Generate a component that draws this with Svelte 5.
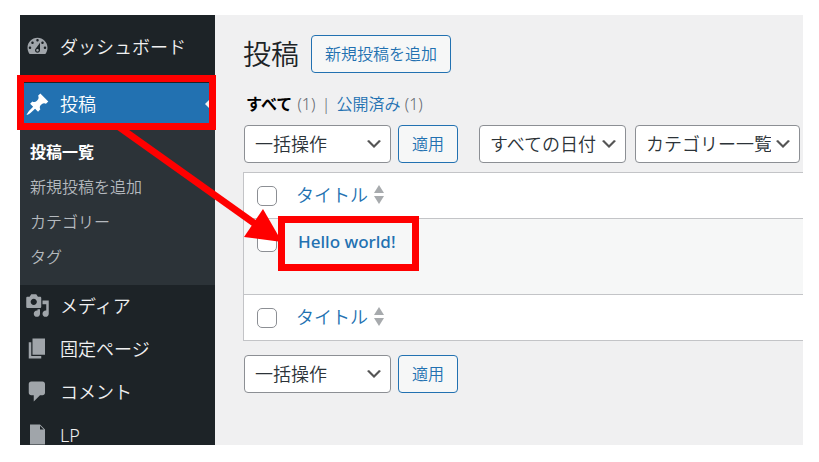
<script lang="ts">
  type MenuItem = { label: string; icon: string; current?: boolean };

  let topMenu: MenuItem[] = [
    {
      label: "ダッシュボード",
      icon: "M3.76 16h12.48c1.1-1.37 1.76-3.11 1.76-5 0-4.42-3.58-8-8-8s-8 3.58-8 8c0 1.89.66 3.63 1.76 5zM10 4c.55 0 1 .45 1 1s-.45 1-1 1-1-.45-1-1 .45-1 1-1zM6 6c.55 0 1 .45 1 1s-.45 1-1 1-1-.45-1-1 .45-1 1-1zm8 0c.55 0 1 .45 1 1s-.45 1-1 1-1-.45-1-1 .45-1 1-1zm-5.37 5.55L12 7v6c0 1.1-.9 2-2 2s-2-.9-2-2c0-.57.24-1.08.63-1.45zM4 10c.55 0 1 .45 1 1s-.45 1-1 1-1-.45-1-1 .45-1 1-1zm12 0c.55 0 1 .45 1 1s-.45 1-1 1-1-.45-1-1 .45-1 1-1zm-5 3c0-.55-.45-1-1-1s-1 .45-1 1 .45 1 1 1 1-.45 1-1z"
    },
    {
      label: "投稿",
      current: true,
      icon: "M10.44 3.02l1.82-1.82 6.36 6.35-1.83 1.82c-1.05-.68-2.48-.57-3.41.36l-.75.75c-.92.93-1.04 2.35-.35 3.41l-1.83 1.82-2.41-2.41-2.8 2.79c-.42.42-3.38 2.71-3.8 2.29s1.86-3.39 2.28-3.81l2.79-2.79L4.1 9.36l1.83-1.82c1.05.69 2.48.57 3.4-.36l.75-.75c.93-.92 1.05-2.35.36-3.41z"
    }
  ];
  let subMenu = ["投稿一覧", "新規投稿を追加", "カテゴリー", "タグ"];
  let bottomMenu: MenuItem[] = [
    {
      label: "メディア",
      icon: "M13 11V4c0-.55-.45-1-1-1h-1.67L9 1H5L3.67 3H2c-.55 0-1 .45-1 1v7c0 .55.45 1 1 1h10c.55 0 1-.45 1-1zM7 4.5c1.38 0 2.5 1.12 2.5 2.5S8.38 9.5 7 9.5 4.5 8.38 4.5 7 5.62 4.5 7 4.5zM14 6h5v10.5c0 1.38-1.12 2.5-2.5 2.5S14 17.88 14 16.5s1.12-2.5 2.5-2.5c.17 0 .34.02.5.05V9h-3V6zm-4 8.05V13h2v3.5c0 1.38-1.12 2.5-2.5 2.5S7 17.88 7 16.5 8.12 14 9.5 14c.17 0 .34.02.5.05z"
    },
    { label: "固定ページ", icon: "M6 15V2h10v13H6zm-1 1h8v2H3V5h2v11z" },
    { label: "コメント", icon: "M5 2h9c1.1 0 2 .9 2 2v7c0 1.1-.9 2-2 2h-2l-5 5v-5H5c-1.1 0-2-.9-2-2V4c0-1.1.9-2 2-2z" },
    { label: "LP", icon: "M12 2l4 4v12H4V2h8zm0 4h3l-3-3v3z" }
  ];

  let posts = [{ id: 1, title: "Hello world!", checked: false }];
  let allChecked = false;

  function toggleAll() {
    posts = posts.map(p => ({ ...p, checked: allChecked }));
  }
</script>

{#snippet menuLink(item: MenuItem)}
  <a class="menu-link" class:current={item.current} href="#menu">
    <svg viewBox="0 0 20 20" aria-hidden="true"><path fill-rule="evenodd" d={item.icon} /></svg>
    {item.label}
  </a>
{/snippet}

{#snippet bulkActions(label: string)}
  <select class="bulk" aria-label={label}>
    <option>一括操作</option>
    <option>編集</option>
    <option>ゴミ箱へ移動</option>
  </select>
  <button class="button" type="button">適用</button>
{/snippet}

{#snippet titleHeading(label: string)}
  <th class="check"><input type="checkbox" aria-label={label} bind:checked={allChecked} on:change={toggleAll}></th>
  <th>
    <a class="sort" href="#sort">
      タイトル
      <svg viewBox="0 0 10 20" aria-hidden="true"><path d="M5 0l5 8H0zM0 11h10l-5 8z" /></svg>
    </a>
  </th>
{/snippet}

<div class="page">
  <div class="screen">
    <nav class="sidebar">
      <ul>
        {#each topMenu as item}
          <li>{@render menuLink(item)}</li>
        {/each}
      </ul>
      <ul class="submenu">
        {#each subMenu as label, i}
          <li><a href="#sub" class:current={i === 0}>{label}</a></li>
        {/each}
      </ul>
      <ul>
        {#each bottomMenu as item}
          <li>{@render menuLink(item)}</li>
        {/each}
      </ul>
    </nav>

    <main>
      <header>
        <h1>投稿</h1>
        <button class="button" type="button">新規投稿を追加</button>
      </header>
      <div class="views">
        <a class="current" href="#all">すべて</a> <span>(1)</span>
        <span class="bar">|</span>
        <a href="#published">公開済み</a> <span>(1)</span>
      </div>
      <div class="tablenav">
        {@render bulkActions("一括操作を選択")}
        <select class="dates" aria-label="日付で絞り込む">
          <option>すべての日付</option>
        </select>
        <select class="categories" aria-label="カテゴリーで絞り込む">
          <option>カテゴリー一覧</option>
        </select>
      </div>
      <table>
        <thead>
          <tr>{@render titleHeading("すべて選択")}</tr>
        </thead>
        <tbody>
          {#each posts as post (post.id)}
            <tr>
              <td class="check"><input type="checkbox" aria-label={post.title} bind:checked={post.checked}></td>
              <td><a class="row-title" href="#post">{post.title}</a></td>
            </tr>
          {/each}
        </tbody>
        <tfoot>
          <tr>{@render titleHeading("すべて選択")}</tr>
        </tfoot>
      </table>
      <div class="tablenav bottom">
        {@render bulkActions("一括操作を選択")}
      </div>
    </main>
  </div>

  <!-- guide: click 投稿, then the post title -->
  <svg class="guide" width="430" height="280" aria-hidden="true">
    <rect x="20.5" y="78.5" width="192" height="48" />
    <rect x="281.5" y="219.5" width="134" height="48" />
    <path d="M119 127L258 226" />
    <polygon points="263,209 244,237 282,242" />
  </svg>
</div>

<style>
  :global(body) { margin: 0; background: #fff; }
  .page {
    position: relative;
    box-sizing: border-box;
    height: 100vh;
    padding: 15px 16px 17px 20px;
    font-family: "Noto Sans", "Noto Sans CJK JP", sans-serif;
    font-size: 16px;
    font-weight: 350;
    line-height: 24px;
    color: #2c3338;
  }
  .screen { display: flex; height: 100%; overflow: hidden; background: #f0f0f1; }
  a { color: #2271b1; text-decoration: none; }
  ul { margin: 0; padding: 0; list-style: none; }

  .sidebar { flex: 0 0 195px; padding-top: 11px; background: #1d2327; }
  .menu-link {
    display: flex;
    align-items: center;
    gap: 10px;
    box-sizing: border-box;
    height: 43px;
    padding: 0 0 2px 5px;
    color: #f0f0f1;
    font-size: 18px;
    line-height: 16px;
  }
  .menu-link svg { width: 25px; height: 25px; fill: #a0a5aa; }
  .menu-link.current { height: 42px; margin-top: 14px; padding-bottom: 0; background: #2271b1; color: #fff; }
  .menu-link.current svg { fill: #fff; }
  .menu-link.current::after {
    content: "";
    margin-left: auto;
    border: 10px solid transparent;
    border-left-width: 0;
    border-right-color: #f0f0f1;
  }
  .submenu { padding: 10px 0; background: #2c3338; }
  .submenu a { display: block; padding: 5px 10px 6px; color: #b4b9be; }
  .submenu a.current { color: #fff; font-weight: 700; }

  main { flex: 1; min-width: 0; padding-left: 28px; white-space: nowrap; overflow: hidden; }
  header { display: flex; align-items: center; gap: 12px; padding-top: 20px; }
  h1 { margin: 0; font-size: 28px; font-weight: 350; line-height: 38px; color: #1d2327; }
  .button {
    box-sizing: border-box;
    height: 38px;
    padding: 0 13px;
    border: 1px solid #2271b1;
    border-radius: 4px;
    background: #f6f7f7;
    color: #2271b1;
    font: inherit;
  }
  .views { padding: 19px 3px 9px; color: #646970; }
  .views a.current { margin-right: 1px; color: #000; font-weight: 700; }
  .bar { margin: 0 2px; }
  .tablenav { display: flex; gap: 7px; padding: 0 0 9px 1px; }
  select {
    appearance: none;
    box-sizing: border-box;
    height: 38px;
    padding: 0 28px 0 10px;
    border: 1px solid #8c8f94;
    border-radius: 4px;
    background: #fff url('data:image/svg+xml,<svg xmlns="http://www.w3.org/2000/svg" viewBox="0 0 20 20"><path d="M5 6l5 5 5-5 2 1-7 7-7-7z" fill="%23555"/></svg>') no-repeat right 6px center / 20px 20px;
    color: #2c3338;
    font: inherit;
    font-size: 18px;
  }
  .bulk { width: 147px; }
  .dates { width: 147px; margin-left: 14px; }
  .categories { width: 165px; margin-left: 2px; }

  table {
    width: 100%;
    border: 1px solid #c3c4c7;
    border-right: 0;
    border-spacing: 0;
    background: #fff;
    font-size: 18px;
  }
  th, td { padding: 10px 0 11px; font-weight: 350; text-align: left; vertical-align: top; }
  .check { width: 52px; padding-left: 13px; box-sizing: border-box; }
  tbody td { height: 54px; background: #f6f7f7; border: solid #c3c4c7; border-width: 1px 0; }
  input {
    appearance: none;
    display: block;
    box-sizing: border-box;
    width: 20px;
    height: 20px;
    margin: 3px 0 0;
    border: 1px solid #8c8f94;
    border-radius: 5px;
    background: #fff;
  }
  input:checked { background: #2271b1; }
  .sort { display: flex; align-items: center; gap: 6px; }
  .sort svg { width: 10px; height: 20px; fill: #a7aaad; }
  .row-title { padding-left: 2px; font-size: 17px; font-weight: 500; }
  .bottom { padding-top: 14px; }

  .guide { position: absolute; top: 0; left: 0; pointer-events: none; }
  .guide rect, .guide path { fill: none; stroke: #f00; stroke-width: 7; }
  .guide polygon { fill: #f00; }
</style>
